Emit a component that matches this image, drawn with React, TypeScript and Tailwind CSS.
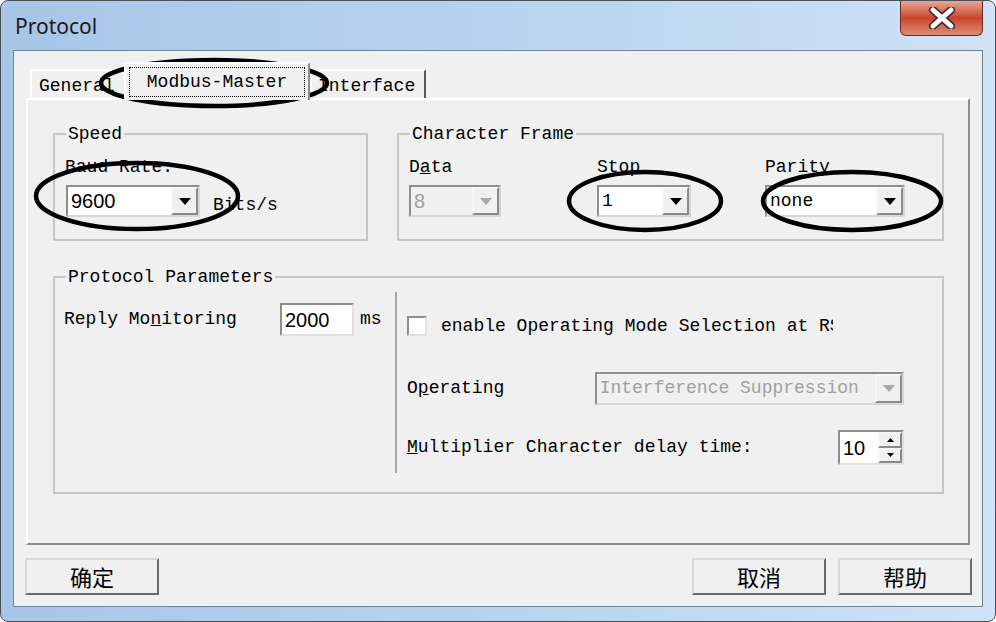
import React from "react";

const mono = "font-['Liberation_Mono',monospace]";
const sans = "font-['Liberation_Sans',Arial,sans-serif]";
const cjk = "font-['Noto_Sans_CJK_SC','Noto_Sans',sans-serif]";

function Arrow({ gray }: { gray?: boolean }) {
  return (
    <svg width="12" height="7" viewBox="0 0 12 7">
      <path d="M0 0 H12 L6 7 Z" fill={gray ? "#a8a8a8" : "#000"} />
    </svg>
  );
}

function Combo({
  value,
  width,
  disabled,
  font,
}: {
  value: string;
  width: string;
  disabled?: boolean;
  font: string;
}) {
  return (
    <div
      className={`flex h-[32px] ${width} border-2 border-t-[#8e8e8e] border-l-[#8e8e8e] border-r-[#d6d6d6] border-b-[#d6d6d6] ${
        disabled ? "bg-[#f0f0f0]" : "bg-white"
      }`}
    >
      <div
        className={`flex flex-1 items-center overflow-hidden whitespace-nowrap pl-[3px] ${font} ${
          disabled ? "text-[#a0a0a0]" : "text-black"
        }`}
      >
        {value}
      </div>
      <div className="flex w-[27px] items-center justify-center border-2 border-t-[#f6f6f6] border-l-[#f6f6f6] border-r-[#8a8a8a] border-b-[#8a8a8a] bg-[#f0f0f0]">
        <Arrow gray={disabled} />
      </div>
    </div>
  );
}

function Group({
  title,
  className,
  children,
}: {
  title: string;
  className: string;
  children: React.ReactNode;
}) {
  return (
    <div className={`relative border-2 border-[#c6c6c6] ${className}`}>
      <span className="absolute -top-[11px] left-[11px] bg-[#f0f0f0] px-[2px] leading-[20px]">{title}</span>
      {children}
    </div>
  );
}

function Btn({ label }: { label: string }) {
  return (
    <button
      className={`flex h-[37px] w-[134px] items-center justify-center border-2 border-t-[#d8d8d8] border-l-[#d8d8d8] border-r-[#6a6a6a] border-b-[#6a6a6a] bg-[#f0f0f0] text-[22px] text-black ${cjk}`}
    >
      {label}
    </button>
  );
}

export default function App() {
  return (
    <div className="relative h-[622px] w-[996px] overflow-hidden rounded-[8px] border border-[#4a5058] bg-gradient-to-r from-[#a7c6e8] via-[#b8d3ef] to-[#cfe2f6]">
      {/* title bar */}
      <div className="flex h-[49px] items-start justify-between">
        <div className="pl-[14px] pt-[10px] font-['Noto_Sans',sans-serif] text-[21px] text-[#1b1b1b]">Protocol</div>
        <div className="mr-[12px] flex h-[35px] w-[83px] items-center justify-center rounded-b-[6px] border border-t-0 border-[#6b2a1f] bg-gradient-to-b from-[#e9a698] via-[#c8432b] to-[#dd8c74]">
          <svg width="30" height="22" viewBox="0 0 30 22">
            <path d="M6 3 L24 19 M24 3 L6 19" stroke="#3b2a28" strokeWidth="8" strokeLinecap="round" />
            <path d="M6 3 L24 19 M24 3 L6 19" stroke="#fff" strokeWidth="5" strokeLinecap="round" />
          </svg>
        </div>
      </div>

      {/* client area */}
      <div className={`mx-[12px] flex h-[557px] flex-col border border-[#6f8396] bg-[#f0f0f0] text-[18px] text-black ${mono}`}>
        {/* tabs */}
        <div className="flex h-[47px] items-end pl-[16px]">
          <div className="flex h-[29px] w-[96px] items-center rounded-t-[2px] border-2 border-b-0 border-t-white border-l-white border-r-[#8c8c8c] pl-[7px] pt-[3px]">
            General
          </div>
          <div className="relative z-10 -mb-[2px] -ml-[2px] flex h-[38px] w-[186px] items-center justify-center rounded-t-[2px] border-2 border-b-0 border-t-white border-l-white border-r-[#8c8c8c] bg-[#f0f0f0] p-[3px]">
            <div className="flex h-full w-full items-center justify-center border border-dotted border-black">Modbus-Master</div>
          </div>
          <div className="flex h-[29px] w-[116px] items-center rounded-t-[2px] border-2 border-b-0 border-t-white border-l-white border-r-[#5a5a5a] pl-[6px] pt-[3px]">
            Interface
          </div>
        </div>

        {/* panel */}
        <div className="ml-[12px] h-[447px] w-[944px] border-2 border-t-white border-l-white border-r-[#8c8c8c] border-b-[#8c8c8c]">
          <div className="ml-[25px] mt-[33px] flex gap-[29px]">
            <Group title="Speed" className="h-[108px] w-[315px]">
              <div className="pl-[10px] pt-[22px]">
                <div className="leading-[20px]">Baud Rate:</div>
                <div className="mt-[8px] flex items-end">
                  <Combo value="9600" width="w-[134px] ml-[1px]" font={`${sans} text-[20px]`} />
                  <span className="ml-[13px] leading-[24px]">Bits/s</span>
                </div>
              </div>
            </Group>
            <Group title="Character Frame" className="h-[108px] w-[547px]">
              <div className="flex pl-[10px] pt-[22px]">
                <div className="w-[188px]">
                  <div className="leading-[20px]">
                    D<span className="underline">a</span>ta
                  </div>
                  <div className="mt-[8px]">
                    <Combo value="8" width="w-[92px]" disabled font={`${sans} text-[20px]`} />
                  </div>
                </div>
                <div className="w-[168px]">
                  <div className="leading-[20px]">Stop</div>
                  <div className="mt-[8px]">
                    <Combo value="1" width="w-[94px]" font={`${mono} text-[18px]`} />
                  </div>
                </div>
                <div>
                  <div className="leading-[20px]">Parity</div>
                  <div className="mt-[8px]">
                    <Combo value="none" width="w-[140px]" font={`${mono} text-[18px]`} />
                  </div>
                </div>
              </div>
            </Group>
          </div>

          <Group title="Protocol Parameters" className="ml-[25px] mt-[35px] h-[218px] w-[891px]">
            <div className="flex">
              <div className="flex w-[340px] items-center self-start pl-[9px] pt-[25px]">
                <span className="w-[216px]">
                  Reply Mo<span className="underline">n</span>itoring
                </span>
                <div className={`flex h-[33px] w-[74px] items-center border-2 border-t-[#8e8e8e] border-l-[#8e8e8e] border-r-[#e0e0e0] border-b-[#e0e0e0] bg-white pl-[3px] text-[20px] ${sans}`}>
                  2000
                </div>
                <span className="ml-[6px]">ms</span>
              </div>
              <div className="mt-[14px] h-[181px] border-l-2 border-[#a8a8a8]" />
              <div className="w-[507px] pl-[10px] pt-[38px]">
                <div className="flex h-[20px] items-center">
                  <div className="h-[20px] w-[20px] border-2 border-t-[#8e8e8e] border-l-[#8e8e8e] border-r-[#e0e0e0] border-b-[#e0e0e0] bg-white" />
                  <span className="ml-[14px] w-[392px] overflow-hidden whitespace-nowrap">
                    enable Operating Mode Selection at RS485
                  </span>
                </div>
                <div className="mt-[36px] flex items-center">
                  <span className="w-[188px]">
                    O<span className="underline">p</span>erating
                  </span>
                  <Combo value="Interference Suppression" width="w-[310px] h-[33px]" disabled font={`${mono} text-[18px]`} />
                </div>
                <div className="mt-[25px] flex items-center">
                  <span className="flex-1">
                    <span className="underline">M</span>ultiplier Character delay time:
                  </span>
                  <div className="flex h-[35px] w-[66px] border-2 border-t-[#8e8e8e] border-l-[#8e8e8e] border-r-[#e0e0e0] border-b-[#e0e0e0] bg-white">
                    <div className={`flex flex-1 items-center pl-[3px] text-[20px] ${sans}`}>10</div>
                    <div className="flex w-[24px] flex-col">
                      <div className="flex flex-1 items-center justify-center border-2 border-t-[#f6f6f6] border-l-[#f6f6f6] border-r-[#8a8a8a] border-b-[#8a8a8a] bg-[#f0f0f0]">
                        <svg width="7" height="4" viewBox="0 0 7 4">
                          <path d="M0 4 H7 L3.5 0 Z" fill="#000" />
                        </svg>
                      </div>
                      <div className="flex flex-1 items-center justify-center border-2 border-t-[#f6f6f6] border-l-[#f6f6f6] border-r-[#8a8a8a] border-b-[#8a8a8a] bg-[#f0f0f0]">
                        <svg width="7" height="4" viewBox="0 0 7 4">
                          <path d="M0 0 H7 L3.5 4 Z" fill="#000" />
                        </svg>
                      </div>
                    </div>
                  </div>
                </div>
              </div>
            </div>
          </Group>
        </div>

        {/* buttons */}
        <div className="mt-[13px] flex justify-between pl-[11px] pr-[10px]">
          <Btn label="确定" />
          <div className="flex gap-[12px]">
            <Btn label="取消" />
            <Btn label="帮助" />
          </div>
        </div>
      </div>

      {/* hand-drawn annotation ellipses */}
      <svg className="pointer-events-none absolute inset-0" width="996" height="622">
        <g fill="none" stroke="#000" strokeWidth="4.5">
          <ellipse cx="213" cy="82" rx="113" ry="23" />
          <ellipse cx="136" cy="195" rx="101" ry="33" />
          <ellipse cx="644" cy="200" rx="76" ry="29" />
          <ellipse cx="851" cy="200" rx="89" ry="29" />
        </g>
      </svg>
    </div>
  );
}
